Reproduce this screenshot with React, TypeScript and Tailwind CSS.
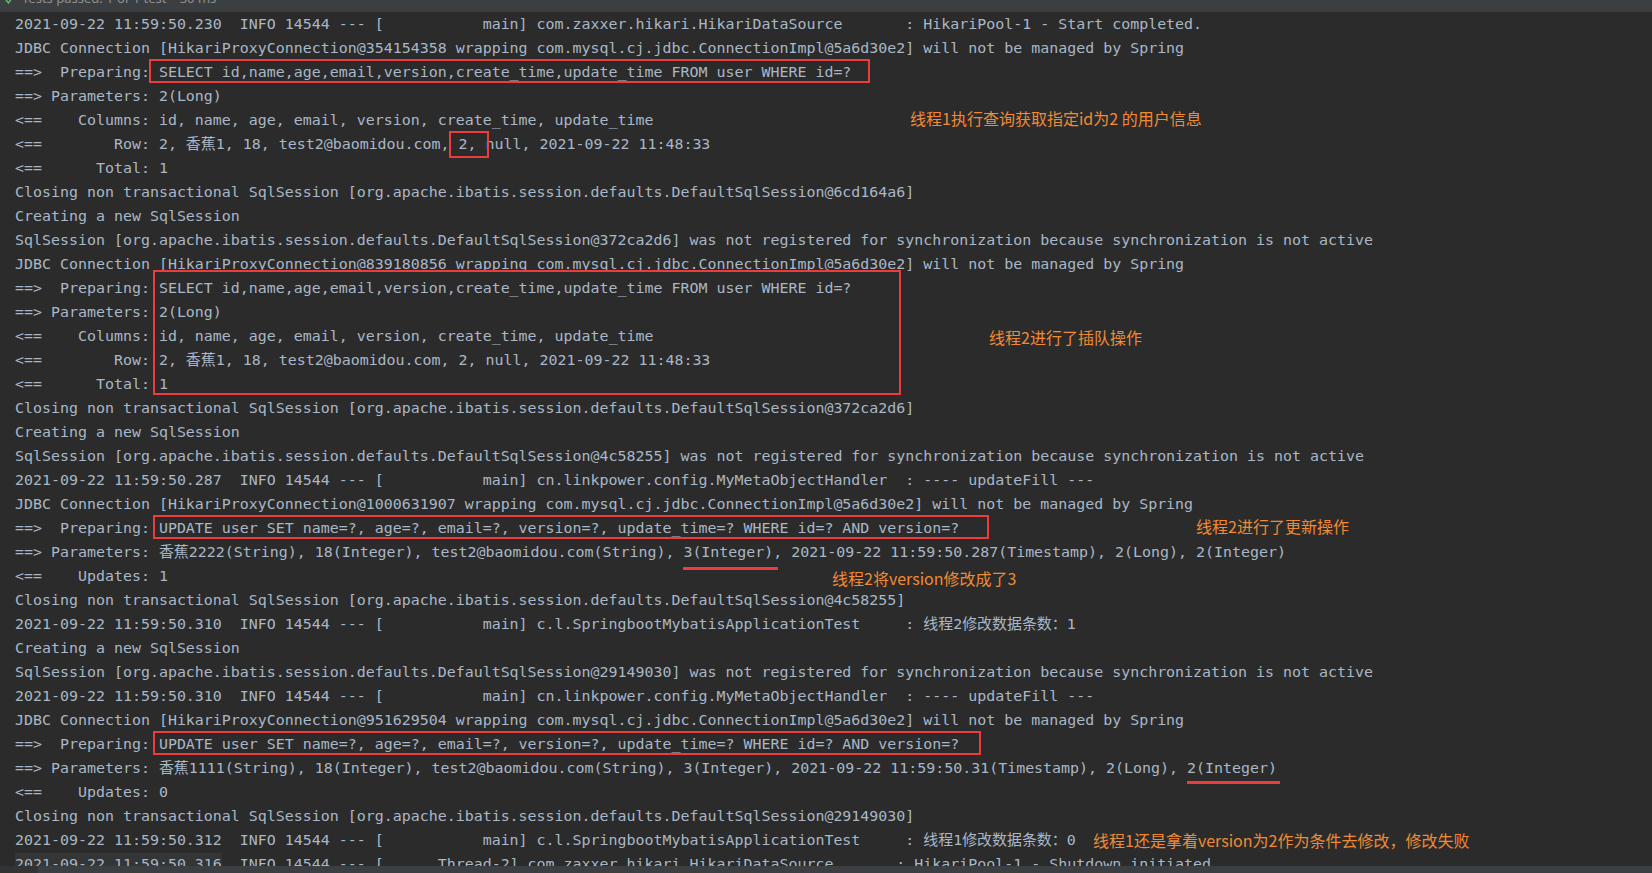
const LOG: string[] = [
  "2021-09-22 11:59:50.230  INFO 14544 --- [           main] com.zaxxer.hikari.HikariDataSource       : HikariPool-1 - Start completed.",
  "JDBC Connection [HikariProxyConnection@354154358 wrapping com.mysql.cj.jdbc.ConnectionImpl@5a6d30e2] will not be managed by Spring",
  "==>  Preparing: SELECT id,name,age,email,version,create_time,update_time FROM user WHERE id=?",
  "==> Parameters: 2(Long)",
  "<==    Columns: id, name, age, email, version, create_time, update_time",
  "<==        Row: 2, 香蕉1, 18, test2@baomidou.com, 2, null, 2021-09-22 11:48:33",
  "<==      Total: 1",
  "Closing non transactional SqlSession [org.apache.ibatis.session.defaults.DefaultSqlSession@6cd164a6]",
  "Creating a new SqlSession",
  "SqlSession [org.apache.ibatis.session.defaults.DefaultSqlSession@372ca2d6] was not registered for synchronization because synchronization is not active",
  "JDBC Connection [HikariProxyConnection@839180856 wrapping com.mysql.cj.jdbc.ConnectionImpl@5a6d30e2] will not be managed by Spring",
  "==>  Preparing: SELECT id,name,age,email,version,create_time,update_time FROM user WHERE id=?",
  "==> Parameters: 2(Long)",
  "<==    Columns: id, name, age, email, version, create_time, update_time",
  "<==        Row: 2, 香蕉1, 18, test2@baomidou.com, 2, null, 2021-09-22 11:48:33",
  "<==      Total: 1",
  "Closing non transactional SqlSession [org.apache.ibatis.session.defaults.DefaultSqlSession@372ca2d6]",
  "Creating a new SqlSession",
  "SqlSession [org.apache.ibatis.session.defaults.DefaultSqlSession@4c58255] was not registered for synchronization because synchronization is not active",
  "2021-09-22 11:59:50.287  INFO 14544 --- [           main] cn.linkpower.config.MyMetaObjectHandler  : ---- updateFill ---",
  "JDBC Connection [HikariProxyConnection@1000631907 wrapping com.mysql.cj.jdbc.ConnectionImpl@5a6d30e2] will not be managed by Spring",
  "==>  Preparing: UPDATE user SET name=?, age=?, email=?, version=?, update_time=? WHERE id=? AND version=?",
  "==> Parameters: 香蕉2222(String), 18(Integer), test2@baomidou.com(String), 3(Integer), 2021-09-22 11:59:50.287(Timestamp), 2(Long), 2(Integer)",
  "<==    Updates: 1",
  "Closing non transactional SqlSession [org.apache.ibatis.session.defaults.DefaultSqlSession@4c58255]",
  "2021-09-22 11:59:50.310  INFO 14544 --- [           main] c.l.SpringbootMybatisApplicationTest     : 线程2修改数据条数：1",
  "Creating a new SqlSession",
  "SqlSession [org.apache.ibatis.session.defaults.DefaultSqlSession@29149030] was not registered for synchronization because synchronization is not active",
  "2021-09-22 11:59:50.310  INFO 14544 --- [           main] cn.linkpower.config.MyMetaObjectHandler  : ---- updateFill ---",
  "JDBC Connection [HikariProxyConnection@951629504 wrapping com.mysql.cj.jdbc.ConnectionImpl@5a6d30e2] will not be managed by Spring",
  "==>  Preparing: UPDATE user SET name=?, age=?, email=?, version=?, update_time=? WHERE id=? AND version=?",
  "==> Parameters: 香蕉1111(String), 18(Integer), test2@baomidou.com(String), 3(Integer), 2021-09-22 11:59:50.31(Timestamp), 2(Long), 2(Integer)",
  "<==    Updates: 0",
  "Closing non transactional SqlSession [org.apache.ibatis.session.defaults.DefaultSqlSession@29149030]",
  "2021-09-22 11:59:50.312  INFO 14544 --- [           main] c.l.SpringbootMybatisApplicationTest     : 线程1修改数据条数：0",
];

const LAST_STAMP = "2021-09-22 11:59:50.316";
const LAST_REST = "  INFO 14544 --- [      Thread-2] com.zaxxer.hikari.HikariDataSource       : HikariPool-1 - Shutdown initiated";

// red marker boxes drawn over the console text
function Box({ className }: { className: string }) {
  return <div className={"pointer-events-none absolute border-2 border-[#ee3b3b] " + className} />;
}

function Note({ className, children }: { className: string; children: React.ReactNode }) {
  return (
    <div
      className={"absolute whitespace-nowrap text-[16px] leading-[24px] text-[#f08a35] " + className}
      style={{ fontFamily: '"Noto Sans CJK SC", "Noto Sans", sans-serif' }}
    >
      {children}
    </div>
  );
}

export default function App() {
  return (
    <div className="flex h-[873px] w-[1652px] flex-col overflow-hidden bg-[#2b2b2b]">
      {/* test runner status bar, mostly cut off */}
      <div className="flex h-[12px] shrink-0 items-end overflow-hidden bg-[#3c3f41] pl-[5px]">
        <svg width="8" height="6" viewBox="0 0 8 6" className="mb-[7px] shrink-0">
          <path d="M1 1 L3.5 4 L7 -1" stroke="#5fb865" strokeWidth="1.6" fill="none" />
        </svg>
        <span
          className="ml-[9px] mb-[6px] whitespace-nowrap text-[13px] leading-[16px] text-[#8f8f8f]"
          style={{ fontFamily: '"Noto Sans", sans-serif' }}
        >
          Tests passed: 1 of 1 test – 30 ms
        </span>
      </div>

      <div
        className="relative h-[854px] shrink-0 overflow-hidden text-[14.95px] text-[#a9b7c6]"
        style={{ fontFamily: '"DejaVu Sans Mono", "Noto Sans CJK SC", monospace' }}
      >
        {LOG.map((line, i) => (
          <div key={i} className="flex h-[24px] items-center whitespace-pre pl-[15px]">
            {line}
          </div>
        ))}
        <div className="flex h-[24px] items-center whitespace-pre pl-[15px]">
          <span className="bg-[#333536]">{LAST_STAMP}</span>
          {LAST_REST}
        </div>

        <Box className="left-[149px] top-[47px] h-[24px] w-[721px]" />
        <Box className="left-[449px] top-[119px] h-[27px] w-[40px]" />
        <Box className="left-[153px] top-[258px] h-[125px] w-[748px]" />
        <Box className="left-[153px] top-[503px] h-[24px] w-[836px]" />
        <div className="absolute left-[683px] top-[555px] h-[3px] w-[95px] bg-[#ee3b3b]" />
        <Box className="left-[153px] top-[719px] h-[24px] w-[828px]" />
        <div className="absolute left-[1187px] top-[769px] h-[3px] w-[93px] bg-[#ee3b3b]" />

        <Note className="left-[910px] top-[94px]">线程1执行查询获取指定id为2 的用户信息</Note>
        <Note className="left-[989px] top-[313px]">线程2进行了插队操作</Note>
        <Note className="left-[1196px] top-[502px]">线程2进行了更新操作</Note>
        <Note className="left-[832px] top-[554px]">线程2将version修改成了3</Note>
        <Note className="left-[1093px] top-[816px]">线程1还是拿着version为2作为条件去修改，修改失败</Note>
      </div>

      <div className="flex h-[7px] shrink-0 bg-[#3c3f41]">
        <div className="w-[38px] bg-[#313335]" />
      </div>
    </div>
  );
}
